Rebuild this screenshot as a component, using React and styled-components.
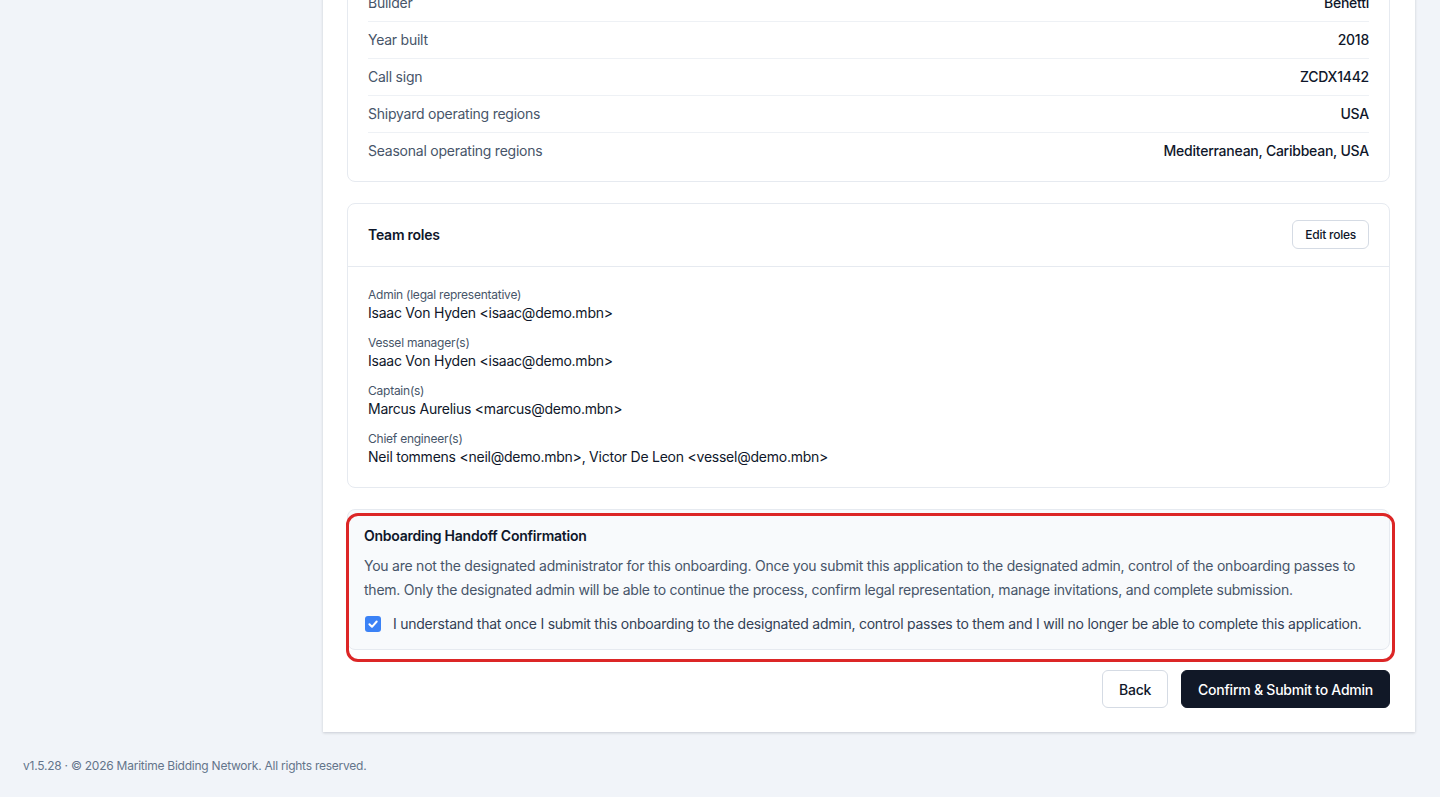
import styled, { createGlobalStyle } from "styled-components";

const GlobalStyle = createGlobalStyle`
  html, body {
    margin: 0;
    padding: 0;
    background: #f1f4f9;
    font-family: Inter, "Noto Sans", "Liberation Sans", sans-serif;
    letter-spacing: -0.015em;
    -webkit-font-smoothing: antialiased;
  }
  * { box-sizing: border-box; }
  button { letter-spacing: inherit; }
`;

const vesselRows = [
  ["Builder", "Benetti"],
  ["Year built", "2018"],
  ["Call sign", "ZCDX1442"],
  ["Shipyard operating regions", "USA"],
  ["Seasonal operating regions", "Mediterranean, Caribbean, USA"],
];

const roles = [
  ["Admin (legal representative)", "Isaac Von Hyden <isaac@demo.mbn>"],
  ["Vessel manager(s)", "Isaac Von Hyden <isaac@demo.mbn>"],
  ["Captain(s)", "Marcus Aurelius <marcus@demo.mbn>"],
  ["Chief engineer(s)", "Neil tommens <neil@demo.mbn>, Victor De Leon <vessel@demo.mbn>"],
];

function CheckMark() {
  return (
    <svg width="12" height="12" viewBox="0 0 12 12" fill="none">
      <path
        d="M2.4 6.2L5 8.8L9.7 3.5"
        stroke="#fff"
        strokeWidth="2"
        strokeLinecap="round"
        strokeLinejoin="round"
      />
    </svg>
  );
}

export default function App() {
  return (
    <>
      <GlobalStyle />
      <Page>
        <Main>
          <Spacer />
          <Panel>
            <DetailsCard>
              {vesselRows.map(([label, value]) => (
                <DetailRow key={label}>
                  <DetailLabel>{label}</DetailLabel>
                  <DetailValue>{value}</DetailValue>
                </DetailRow>
              ))}
            </DetailsCard>

            <Card>
              <CardHeader>
                <CardTitle>Team roles</CardTitle>
                <SmallButton>Edit roles</SmallButton>
              </CardHeader>
              <CardBody>
                {roles.map(([label, value]) => (
                  <RoleGroup key={label}>
                    <RoleLabel>{label}</RoleLabel>
                    <RoleValue>{value}</RoleValue>
                  </RoleGroup>
                ))}
              </CardBody>
            </Card>

            <HandoffWrap>
              <HandoffBox>
                <HandoffTitle>Onboarding Handoff Confirmation</HandoffTitle>
                <HandoffText>
                  You are not the designated administrator for this onboarding. Once you
                  submit this application to the designated admin, control of the onboarding
                  passes to them. Only the designated admin will be able to continue the
                  process, confirm legal representation, manage invitations, and complete
                  submission.
                </HandoffText>
                <CheckRow>
                  <CheckBox>
                    <CheckMark />
                  </CheckBox>
                  <CheckLabel>
                    I understand that once I submit this onboarding to the designated admin,
                    control passes to them and I will no longer be able to complete this
                    application.
                  </CheckLabel>
                </CheckRow>
              </HandoffBox>
              <Highlight />
            </HandoffWrap>

            <Actions>
              <Button>Back</Button>
              <Button $primary>Confirm &amp; Submit to Admin</Button>
            </Actions>
          </Panel>
        </Main>
        <Footer>v1.5.28 · © 2026 Maritime Bidding Network. All rights reserved.</Footer>
      </Page>
    </>
  );
}

const Page = styled.div`
  height: 797px;
  overflow: hidden;
  display: flex;
  flex-direction: column;
`;

const Main = styled.div`
  display: flex;
  padding-right: 25px;
`;

const Spacer = styled.div`
  width: 323px;
  flex-shrink: 0;
`;

const Panel = styled.div`
  flex: 1;
  margin-top: -40px;
  background: #ffffff;
  padding: 24px 25px 24px 24px;
  box-shadow: 0 1px 3px rgba(15, 23, 42, 0.12), 0 1px 2px rgba(15, 23, 42, 0.06);
  display: flex;
  flex-direction: column;
`;

const Card = styled.div`
  border: 1px solid #e6eaf0;
  border-radius: 8px;
  background: #ffffff;
  margin-bottom: 21px;
`;

const DetailsCard = styled(Card)`
  padding: 0 20px 12px;
`;

const DetailRow = styled.div`
  display: flex;
  justify-content: space-between;
  align-items: center;
  padding: 8px 0;
  font-size: 14px;
  line-height: 20px;
  border-bottom: 1px solid #eef1f5;

  &:last-child {
    border-bottom: none;
  }
`;

const DetailLabel = styled.span`
  color: #475569;
`;

const DetailValue = styled.span`
  color: #0f172a;
  font-weight: 500;
`;

const CardHeader = styled.div`
  display: flex;
  justify-content: space-between;
  align-items: center;
  padding: 16px 20px 17px;
  border-bottom: 1px solid #e6eaf0;
`;

const CardTitle = styled.h3`
  margin: 0;
  font-size: 14px;
  line-height: 20px;
  font-weight: 600;
  color: #0f172a;
`;

const SmallButton = styled.button`
  height: 29px;
  padding: 0 12px;
  font-family: inherit;
  font-size: 12px;
  font-weight: 500;
  color: #0f172a;
  background: #ffffff;
  border: 1px solid #d5dbe4;
  border-radius: 6px;
`;

const CardBody = styled.div`
  padding: 20px 20px 20px;
  display: flex;
  flex-direction: column;
  gap: 12px;
`;

const RoleGroup = styled.div`
  display: flex;
  flex-direction: column;
`;

const RoleLabel = styled.span`
  font-size: 12px;
  line-height: 16px;
  color: #475569;
`;

const RoleValue = styled.span`
  font-size: 14px;
  line-height: 20px;
  color: #0f172a;
`;

const HandoffWrap = styled.div`
  position: relative;
`;

const HandoffBox = styled.div`
  background: #f8fafc;
  border: 1px solid #e6eaf0;
  border-radius: 8px;
  padding: 16px 16px 15px;
`;

const Highlight = styled.div`
  position: absolute;
  top: 4px;
  left: -1px;
  right: -5px;
  bottom: -12px;
  border: 3px solid #dc2626;
  border-radius: 12px;
  pointer-events: none;
`;

const HandoffTitle = styled.h4`
  margin: 0 0 8px;
  font-size: 14px;
  line-height: 20px;
  font-weight: 600;
  color: #0f172a;
`;

const HandoffText = styled.p`
  margin: 0 0 12px;
  font-size: 14px;
  line-height: 24px;
  color: #475569;
`;

const CheckRow = styled.label`
  display: flex;
  align-items: center;
  gap: 12px;
  padding-left: 1px;
`;

const CheckBox = styled.span`
  width: 16px;
  height: 16px;
  flex-shrink: 0;
  border-radius: 3px;
  background: #3b82f6;
  display: flex;
  align-items: center;
  justify-content: center;
`;

const CheckLabel = styled.span`
  font-size: 14px;
  line-height: 20px;
  color: #334155;
`;

const Actions = styled.div`
  display: flex;
  justify-content: flex-end;
  gap: 13px;
  margin-top: 20px;
`;

const Button = styled.button`
  height: 38px;
  padding: 0 16px;
  font-family: inherit;
  font-size: 14px;
  font-weight: 500;
  border-radius: 6px;
  border: 1px solid ${(p) => (p.$primary ? "#111827" : "#d5dbe4")};
  background: ${(p) => (p.$primary ? "#111827" : "#ffffff")};
  color: ${(p) => (p.$primary ? "#ffffff" : "#0f172a")};
`;

const Footer = styled.footer`
  padding: 26px 23px 24px;
  font-size: 12px;
  line-height: 16px;
  color: #64748b;
`;
